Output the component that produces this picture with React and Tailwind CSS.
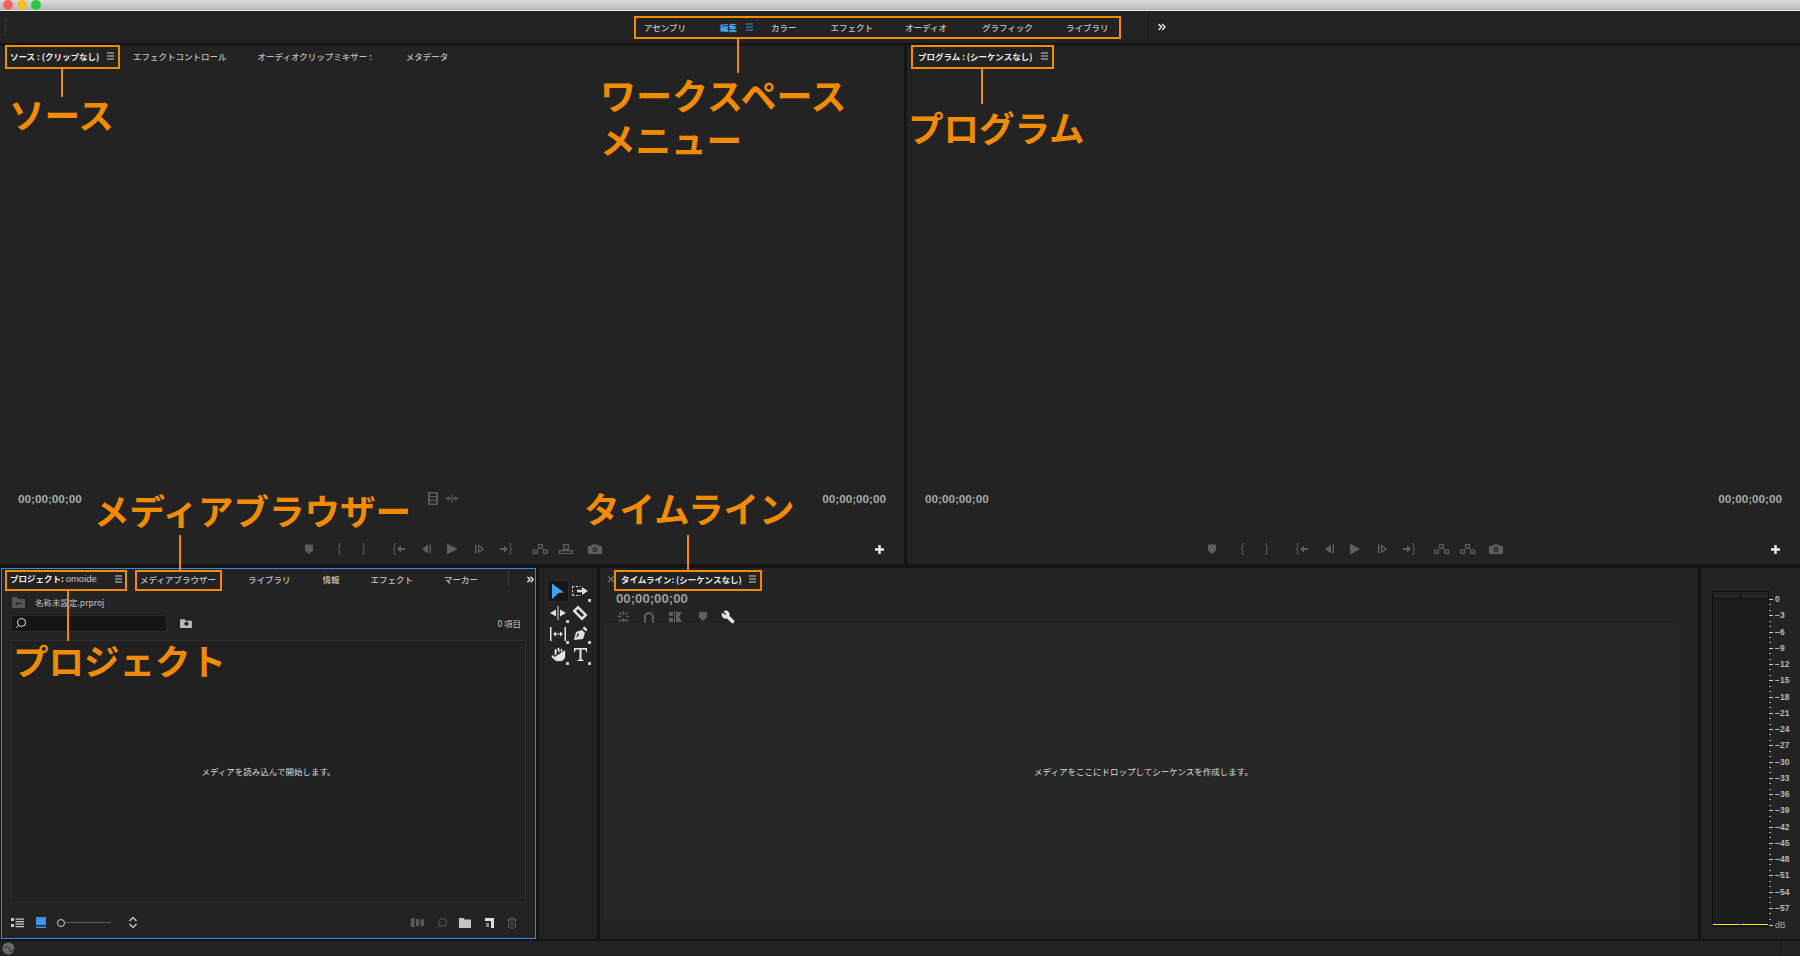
import React from "react";
import { Wrench, Hand, Search, Trash2, ChevronsRight } from "lucide-react";

const JP = { fontFamily: '"Noto Sans CJK JP", "Noto Sans", sans-serif' };

function Ham({ blue }) {
  return (
    <svg width="9" height="8" viewBox="0 0 9 8" className="shrink-0">
      <path d="M1 1h7M1 4h7M1 7h7" stroke={blue ? "#3d8fe0" : "#cfcfcf"} strokeWidth="1.2" />
    </svg>
  );
}

function Ic({ w = 16, h = 14, vb, children, c = "#5e5e5e" }) {
  return (
    <svg width={w} height={h} viewBox={vb || `0 0 ${w} ${h}`} fill={c} stroke="none" className="shrink-0">
      {children}
    </svg>
  );
}

const marker = <path d="M4 2.500h8v6l-4 3.500-4-3.500z" />;
const braceL = <path d="M9.500 1.500H8.500V6L7 7l1.500 1v4.500h1" fill="none" stroke="#5e5e5e" strokeWidth="1" />;
const braceR = <path d="M6.500 1.500h1V6L9 7 7.500 8v4.500h-1" fill="none" stroke="#5e5e5e" strokeWidth="1" />;
const goIn = (
  <>
    <path d="M4.500 1.500h-1V6L2 7l1.500 1v4.500h1" fill="none" stroke="#5e5e5e" />
    <path d="M6 7l4-3.500v2.500h4v2h-4v2.500z" />
  </>
);
const stepB = <path d="M4 7l6-4.500v9zM11.500 2.500h1.500v9h-1.500z" />;
const play = <path d="M3 1.500l10.500 5.500L3 12.500z" />;
const stepF = <path d="M3 2.500h1.500v9H3zM6 2.500l6.500 4.500L6 11.500zM7.200 5v4l3-2z" fillRule="evenodd" />;
const goOut = (
  <>
    <path d="M11.500 1.500h1V6L14 7l-1.500 1v4.500h-1" fill="none" stroke="#5e5e5e" />
    <path d="M10 7L6 3.500v2.500H2v2h4v2.500z" />
  </>
);
const insert = (
  <path d="M6 2h5v5H6zM1 7.500h5V12H1zM11 7.500h5V12h-5zM2.200 8.700v2.100h2.600V8.700zM12.200 8.700v2.100h2.600V8.700zM7.200 3.200v2.600h2.600V3.200z" fillRule="evenodd" />
);
const overwrite = (
  <path d="M5 2h6v6H5zM1 8h14v4H1zM6.200 3.200v3.600h3.600V3.200zM2.200 9.200V11h11.600V9.200z" fillRule="evenodd" />
);
const camera = (
  <path d="M5 2.500h6l1 1.500h3v8H1V4h3zM8 5a2.500 2.500 0 100 5 2.500 2.500 0 000-5zM8 6.300a1.200 1.200 0 110 2.400 1.200 1.200 0 010-2.400z" fillRule="evenodd" />
);

function Transport({ program }) {
  return (
    <div className="flex items-center justify-center h-[14px]">
      <Ic>{marker}</Ic>
      <div className="ml-[14px]"><Ic>{braceL}</Ic></div>
      <div className="ml-[9px]"><Ic>{braceR}</Ic></div>
      <div className="ml-[19px]"><Ic>{goIn}</Ic></div>
      <div className="ml-[11px]"><Ic>{stepB}</Ic></div>
      <div className="ml-[10px]"><Ic>{play}</Ic></div>
      <div className="ml-[12px]"><Ic>{stepF}</Ic></div>
      <div className="ml-[10px]"><Ic>{goOut}</Ic></div>
      <div className={program ? "ml-[16px]" : "ml-[18px]"}><Ic w={17} vb="0 0 17 14">{insert}</Ic></div>
      <div className="ml-[9px]"><Ic>{program ? insert : overwrite}</Ic></div>
      <div className="ml-[13px]"><Ic>{camera}</Ic></div>
    </div>
  );
}

function Timecode({ children, big }) {
  return (
    <span
      className={big ? "text-[13.2px] font-bold text-[#9c9c9c] leading-none" : "text-[11.7px] font-bold text-[#a8a8a8] leading-none"}
      style={{ fontFamily: '"Liberation Sans", Arial, sans-serif' }}
    >
      {children}
    </span>
  );
}

function Plus() {
  return (
    <svg width="11" height="11" viewBox="0 0 11 11">
      <path d="M5.500 1v9M1 5.500h9" stroke="#ececec" strokeWidth="2.400" />
    </svg>
  );
}

function Monitor({ program }) {
  return (
    <div className="h-full flex flex-col bg-[#232323] pb-[7px]">
      {program ? (
        <div className="h-[20px] mb-[2px] flex items-center ml-[11px] text-[8.5px] gap-[8px]">
          <span className="font-bold text-[#f0f0f0] whitespace-nowrap">プログラム : (シーケンスなし)</span>
          <Ham />
        </div>
      ) : (
        <div className="h-[20px] mb-[2px] flex items-center text-[8.5px] text-[#c0c0c0]">
          <div className="relative ml-[9px] flex items-center justify-between h-full w-[107px] shrink-0 pl-px pr-[1px]">
            <span className="font-bold text-[#f0f0f0] whitespace-nowrap">ソース : (クリップなし)</span>
            <Ham />
            <div className="absolute left-0 right-0 bottom-[-2px] h-px bg-[#e0e0e0]" />
          </div>
          <span className="ml-[17px] font-medium whitespace-nowrap">エフェクトコントロール</span>
          <span className="ml-[31px] font-medium whitespace-nowrap">オーディオクリップミキサー :</span>
          <span className="ml-[34px] font-medium whitespace-nowrap">メタデータ</span>
        </div>
      )}
      <div className="flex-1" />
      <div className="flex items-center justify-between pl-[18px] pr-[18px] relative">
        <Timecode>00;00;00;00</Timecode>
        {!program && (
          <div className="absolute left-[428px] top-[-1px] flex items-center gap-[8px]">
            <svg width="10" height="13" viewBox="0 0 10 13"><path d="M0 0h10v13H0zM2 1.500V4h6V1.500zM2 5.200v2.600h6V5.200zM2 9v2.500h6V9z" fill="#5a5a5a" fillRule="evenodd" /></svg>
            <svg width="12" height="9" viewBox="0 0 12 9"><path d="M1 3v3M3 2v5M6 0v9M9 2v5M11 3v3M0 4.500h12" stroke="#5a5a5a" /></svg>
          </div>
        )}
        <Timecode>00;00;00;00</Timecode>
      </div>
      <div className="h-[37px]" />
      <div className="relative">
        <Transport program={program} />
        <div className="absolute right-[19px] top-[2px]"><Plus /></div>
      </div>
      <div className="h-[1px]" />
    </div>
  );
}

function Corner() {
  return <div className="absolute right-0 bottom-0 w-[3px] h-[3px] bg-[#c8c8c8]" />;
}

function Tool({ children, active, corner = true }) {
  return (
    <div className={active ? "relative w-[22px] h-[22px] flex items-center justify-center bg-[#161616] rounded-[2px] border border-[#2c2c2c]" : "relative w-[22px] h-[21px] flex items-center justify-center"}>
      {children}
      {corner && !active && <Corner />}
    </div>
  );
}

function ToolsPanel() {
  return (
    <div className="w-[58px] shrink-0 bg-[#232323] pl-[8px] pt-[12px]">
      <div className="grid grid-cols-[22px_22px] items-center">
        <Tool active>
          <svg width="14" height="17" viewBox="0 0 14 17"><path d="M1 0.500l12 9-5.500.5-6.500 6z" fill="#3fa3ef" /></svg>
        </Tool>
        <Tool>
          <svg width="18" height="12" viewBox="0 0 18 12">
            <path d="M1.500 1.500h8M1.500 10.500h8M1.500 1.500v9" fill="none" stroke="#dcdcdc" strokeDasharray="2 1.500" />
            <path d="M6 4.800h5V2l6 4-6 4V7.200H6z" fill="#dcdcdc" />
          </svg>
        </Tool>
        <Tool>
          <svg width="18" height="14" viewBox="0 0 18 14"><path d="M8.500 0h1v14h-1zM1 7l6-3.500v7zM17 7l-6-3.500v7z" fill="#e0e0e0" /></svg>
        </Tool>
        <Tool corner={false}>
          <svg width="16" height="16" viewBox="0 0 16 16"><path d="M6 .5L15.500 10 10 15.500.5 6zM6 4L4 6l6 6 2-2z" fill="#e0e0e0" fillRule="evenodd" /></svg>
        </Tool>
        <Tool>
          <svg width="18" height="14" viewBox="0 0 18 14"><path d="M1 0h1.500v14H1zM15.500 0H17v14h-1.500zM4 7l3-2.500v2h4v-2L14 7l-3 2.500v-2H7v2z" fill="#e0e0e0" /></svg>
        </Tool>
        <Tool>
          <svg width="15" height="15" viewBox="0 0 15 15">
            <path d="M1 14L3 6l6-2 3 3-2 6zM5 6.500L3 12l3-3z M9.500 2l2-1.500 3 3L13 5.500z" fill="#e0e0e0" fillRule="evenodd" />
          </svg>
        </Tool>
        <Tool>
          <Hand size={17} color="#222" fill="#e6e6e6" strokeWidth={1.100} />
        </Tool>
        <Tool>
          <svg width="15" height="15" viewBox="0 0 15 15"><path d="M1 1h13v4h-1l-.5-2.500H8.500v10l2 .5v1h-6v-1l2-.5v-10H2.500L2 5H1z" fill="#e6e6e6" /></svg>
        </Tool>
      </div>
    </div>
  );
}

function ProjectPanel() {
  return (
    <div className="w-[535px] shrink-0 ml-px border border-[#2d8ceb] bg-[#232323] flex flex-col">
      <div className="h-[20px] mb-[2px] flex items-center text-[8.5px] text-[#c4c4c4] shrink-0">
        <div className="relative ml-[8px] h-full w-[114px] shrink-0 flex items-center justify-between pr-[1px]">
          <span className="text-[#c8c8c8] whitespace-nowrap"><b className="text-[#f0f0f0]">プロジェクト:</b> <span className="font-normal text-[9.5px]" style={{ fontFamily: '"Liberation Sans", sans-serif' }}>omoide</span></span>
          <Ham />
          <div className="absolute left-0 right-0 bottom-[-2px] h-px bg-[#e0e0e0]" />
        </div>
        <span className="ml-[16px] font-medium whitespace-nowrap">メディアブラウザー</span>
        <span className="ml-[32px] font-medium whitespace-nowrap">ライブラリ</span>
        <span className="ml-[32px] font-medium whitespace-nowrap">情報</span>
        <span className="ml-[31px] font-medium whitespace-nowrap">エフェクト</span>
        <span className="ml-[31px] font-medium whitespace-nowrap">マーカー</span>
        <div className="ml-[30px] w-px h-[16px] bg-[#3a3a3a] shrink-0" />
        <ChevronsRight size={11} color="#e8e8e8" strokeWidth={3} className="ml-[16px] shrink-0" />
      </div>
      <div className="h-[22px] flex items-center pl-[10px] shrink-0 text-[8.5px] text-[#c4c4c4]">
        <svg width="13" height="12" viewBox="0 0 13 12"><path d="M0 1h5l1 2h7v9H0zM3 7.500l3-2v1.500h4v1H6v1.500z" fill="#565656" fillRule="evenodd" /></svg>
        <span className="ml-[10px]">名称未設定.prproj</span>
      </div>
      <div className="h-[20px] flex items-center pl-[9px] pr-[14px] shrink-0">
        <div className="w-[156px] h-[17px] bg-[#161616] border border-[#2b2b2b] rounded-[2px] flex items-center pl-[3px]">
          <Search size={12} color="#e0e0e0" strokeWidth={2} style={{ transform: "scaleX(-1)" }} />
        </div>
        <svg width="12" height="10" viewBox="0 0 13 11" className="ml-[13px]"><path d="M0 1.500h5l1 1.500h7v8H0zM7 4a2.300 2.300 0 100 4.600A2.300 2.300 0 007 4z" fill="#b8b8b8" fillRule="evenodd" /></svg>
        <span className="ml-auto text-[8.5px] text-[#c4c4c4] whitespace-nowrap">0 項目</span>
      </div>
      <div className="mx-[9px] mt-[7px] h-[263px] shrink-0 border border-[#2e2e2e] bg-[#212121] flex items-center justify-center text-[8.5px] text-[#dcdcdc]">
        メディアを読み込んで開始します。
      </div>
      <div className="flex-1 flex items-center pl-[9px] pt-[4px]">
        <svg width="13" height="10" viewBox="0 0 13 10"><path d="M0 0h3v3H0zM0 6h3v3H0zM4.500 .5H13v1.200H4.500zM4.500 3H13v1.200H4.500zM4.500 5.500H13v1.200H4.500zM4.500 8H13v1.200H4.500z" fill="#c8c8c8" /></svg>
        <svg width="10" height="11" viewBox="0 0 10 11" className="ml-[12px]"><path d="M0 0h10v8H0zM0 9.500h10V11H0z" fill="#3b94e6" /></svg>
        <div className="ml-[11px] w-[8px] h-[8px] rounded-full border border-[#cfcfcf] shrink-0" />
        <div className="w-[46px] h-px bg-[#5a5a5a]" />
        <svg width="8" height="11" viewBox="0 0 8 11" className="ml-[18px]"><path d="M4 .5L7.500 4M4 .5L.5 4M4 10.500L7.500 7M4 10.500L.5 7" stroke="#d0d0d0" fill="none" strokeWidth="1.200" /></svg>
        <div className="ml-auto flex items-center pr-[17px]">
          <svg width="13" height="9" viewBox="0 0 13 9"><path d="M0 0h3.500v9H0zM5 1h3v7H5zM9.500 1.500H13V8H9.500z" fill="#5a5a5a" /></svg>
          <Search size={12} color="#5a5a5a" strokeWidth={2} className="ml-[12px]" style={{ transform: "scaleX(-1)" }} />
          <svg width="12" height="10" viewBox="0 0 12 10" className="ml-[11px]"><path d="M0 0h4.500l1 1.500H12V10H0z" fill="#c4c4c4" /></svg>
          <svg width="9" height="10" viewBox="0 0 9 10" className="ml-[14px]"><path d="M0 0h9v10H6V3H0z" fill="#e0e0e0" /><path d="M1 5h3v4H1z" fill="#8a8a8a" /></svg>
          <Trash2 size={12} color="#5a5a5a" strokeWidth={2} className="ml-[12px]" />
        </div>
      </div>
    </div>
  );
}

function TimelinePanel() {
  return (
    <div className="flex-1 bg-[#232323] flex flex-col">
      <div className="h-[22px] flex items-center pl-[6px] text-[8.5px] shrink-0">
        <span className="text-[10px] leading-none text-[#9a9a9a] w-[15px]">×</span>
        <span className="font-bold text-[#ececec] whitespace-nowrap">タイムライン: (シーケンスなし)</span>
        <span className="ml-[6px]"><Ham /></span>
      </div>
      <div className="h-[17px] flex items-center pl-[16px] shrink-0">
        <Timecode big>00;00;00;00</Timecode>
      </div>
      <div className="h-[16px] pt-[3px] flex items-center pl-[17px] shrink-0">
        <svg width="13" height="13" viewBox="0 0 13 13"><path d="M6.500 1v4M6.500 8v4M1 6.500h3M9 6.500h3M2.500 2.500l2 2M10.500 2.500l-2 2M1.500 10.500h10" stroke="#5e5e5e" strokeWidth="1.400" /></svg>
        <svg width="12" height="12" viewBox="0 0 12 12" className="ml-[13px]"><path d="M2 11.500V6a4 4 0 018 0v5.500" fill="none" stroke="#5e5e5e" strokeWidth="2.200" /></svg>
        <svg width="13" height="12" viewBox="0 0 13 12" className="ml-[14px]"><path d="M0 1h4v4H0zM0 7h4v4H0zM5 0h1v12H5zM7 1l6 0-3 5 3 5-6 0z" fill="#5e5e5e" /></svg>
        <svg width="8" height="9" viewBox="0 0 8 9" className="ml-[17px]"><path d="M0 0h8v5.500L4 9 0 5.500z" fill="#5e5e5e" /></svg>
        <Wrench size={14} color="#e4e4e4" fill="#e4e4e4" strokeWidth={1.800} className="ml-[14px] -scale-x-100" />
      </div>
      <div className="ml-[4px] mr-[19px] h-[297px] shrink-0 bg-[#272727] flex items-center justify-center text-[8.5px] text-[#dcdcdc] pl-[4px]">
        メディアをここにドロップしてシーケンスを作成します。
      </div>
    </div>
  );
}

const scale = ["0","-3","-6","-9","-12","-15","-18","-21","-24","-27","-30","-33","-36","-39","-42","-45","-48","-51","-54","-57"];

function MeterPanel() {
  return (
    <div className="w-[99px] shrink-0 bg-[#232323] pt-[23px] pl-[11px] flex">
      <div className="w-[57px] h-[336px] border border-[#0f0f0f] bg-[#1d1d1d] flex flex-col shrink-0">
        <div className="h-[7px] border-b border-[#0f0f0f] bg-[#252525] flex">
          <div className="flex-1 border-r border-[#0f0f0f]" />
          <div className="flex-1" />
        </div>
        <div className="flex-1" />
        <div className="h-px flex gap-px mb-[1px]">
          <div className="flex-1 bg-[#f5f000]" />
          <div className="flex-1 bg-[#f5f000]" />
        </div>
      </div>
      <div className="pt-[5px] flex flex-col">
        {scale.map((s) => (
          <div key={s} className="h-[16.25px] flex">
            <div className="w-[6px] flex flex-col pt-[3px] gap-[4.400px]">
              <div className="w-[4px] h-px bg-[#cfcfcf]" />
              <div className="w-[2px] h-px bg-[#a8a8a8]" />
              <div className="w-[2px] h-px bg-[#a8a8a8]" />
            </div>
            <span className="text-[8.500px] leading-[7px] font-bold text-[#b8b8b8] whitespace-nowrap" style={{ fontFamily: '"Liberation Sans", sans-serif' }}>
              {s.replace("-", "−")}
            </span>
          </div>
        ))}
        <div className="flex h-[8px] items-center">
          <div className="w-[4px] h-px bg-[#cfcfcf] mr-[2px]" />
          <span className="text-[8.500px] leading-none text-[#a8a8a8]" style={{ fontFamily: '"Liberation Sans", sans-serif' }}>dB</span>
        </div>
      </div>
    </div>
  );
}

function Box({ className }) {
  return <div className={"absolute border-2 border-[#f28b00] " + className} />;
}
function Line({ className }) {
  return <div className={"absolute w-[2px] bg-[#f28b00] " + className} />;
}
function Label({ className, children }) {
  return (
    <div className={"absolute leading-none font-bold text-[#f28b00] whitespace-nowrap " + className} style={JP}>
      {children}
    </div>
  );
}

function Annotations() {
  return (
    <div className="absolute inset-0 pointer-events-none">
      <Box className="left-[5px] top-[45px] w-[115px] h-[24px]" />
      <Line className="left-[61px] top-[69px] h-[28px]" />
      <Label className="text-[35.5px] left-[9px] top-[96px]">ソース</Label>

      <Box className="left-[634px] top-[16px] w-[487px] h-[23px]" />
      <Line className="left-[737px] top-[39px] h-[34px]" />
      <Label className="text-[36px] left-[600px] top-[76px]">ワークスペース</Label>
      <Label className="text-[35.5px] left-[600px] top-[121px]">メニュー</Label>

      <Box className="left-[911px] top-[45px] w-[143px] h-[24px]" />
      <Line className="left-[981px] top-[69px] h-[35px]" />
      <Label className="text-[35.5px] left-[908px] top-[109px]">プログラム</Label>

      <Label className="text-[35.5px] left-[94px] top-[492px]">メディアブラウザー</Label>
      <Line className="left-[179px] top-[535px] h-[35px]" />
      <Box className="left-[135px] top-[570px] w-[87px] h-[21px]" />

      <Box className="left-[5px] top-[570px] w-[122px] h-[21px]" />
      <Line className="left-[67px] top-[591px] h-[50px]" />
      <Label className="text-[35.5px] left-[13px] top-[642px]">プロジェクト</Label>

      <Label className="text-[35.5px] left-[584px] top-[490px]">タイムライン</Label>
      <Line className="left-[687px] top-[535px] h-[35px]" />
      <Box className="left-[614px] top-[570px] w-[148px] h-[21px]" />
    </div>
  );
}

export default function App() {
  return (
    <div className="relative w-[1800px] h-[956px] overflow-hidden bg-[#141414] flex flex-col" style={JP}>
      <div className="h-[10px] shrink-0 bg-gradient-to-b from-[#dcdcdc] to-[#b8b8b8] flex items-center gap-[4px] pl-[3px]">
        <div className="w-[10px] h-[10px] rounded-full bg-[#f2645e]" />
        <div className="w-[10px] h-[10px] rounded-full bg-[#f4c02a]" />
        <div className="w-[10px] h-[10px] rounded-full bg-[#2cc83e]" />
      </div>
      <div className="h-px bg-[#e8e8e8] shrink-0" />
      <div className="h-[32px] shrink-0 bg-[#232323] flex items-center text-[8.5px] text-[#c4c4c4] font-medium">
        <div className="w-px h-[18px] bg-[#3a3a3a] ml-[5px] shrink-0" />
        <span className="ml-[638px] whitespace-nowrap">アセンブリ</span>
        <span className="ml-[34px] font-bold text-[#45aef5] whitespace-nowrap">編集</span>
        <span className="ml-[8px]"><Ham blue /></span>
        <span className="ml-[17px] whitespace-nowrap">カラー</span>
        <span className="ml-[34px] whitespace-nowrap">エフェクト</span>
        <span className="ml-[32px] whitespace-nowrap">オーディオ</span>
        <span className="ml-[35px] whitespace-nowrap">グラフィック</span>
        <span className="ml-[33px] whitespace-nowrap">ライブラリ</span>
        <div className="ml-[40px] w-px h-[32px] bg-[#1a1a1a] shrink-0" />
        <ChevronsRight size={12} color="#e8e8e8" strokeWidth={3} className="ml-[7px] shrink-0" />
      </div>
      <div className="h-[3px] shrink-0" />
      <div className="h-[518px] shrink-0 flex gap-[3px]">
        <div className="w-[904px]"><Monitor /></div>
        <div className="flex-1"><Monitor program /></div>
      </div>
      <div className="h-[4px] shrink-0" />
      <div className="h-[371px] shrink-0 flex gap-[3px]">
        <ProjectPanel />
        <ToolsPanel />
        <TimelinePanel />
        <MeterPanel />
      </div>
      <div className="h-[2px] shrink-0" />
      <div className="flex-1 bg-[#232323] flex items-center pl-[2px]">
        <svg width="13" height="13" viewBox="0 0 13 13"><circle cx="6.500" cy="6.500" r="6" fill="#6a6a6a" /><path d="M3 6.500a2 2 0 013.500-1.200l1.500 2a2 2 0 103-1" fill="none" stroke="#222" strokeWidth="1" /></svg>
        <div className="ml-auto mr-[19px] w-px h-full bg-[#161616]" />
      </div>
      <Annotations />
    </div>
  );
}
